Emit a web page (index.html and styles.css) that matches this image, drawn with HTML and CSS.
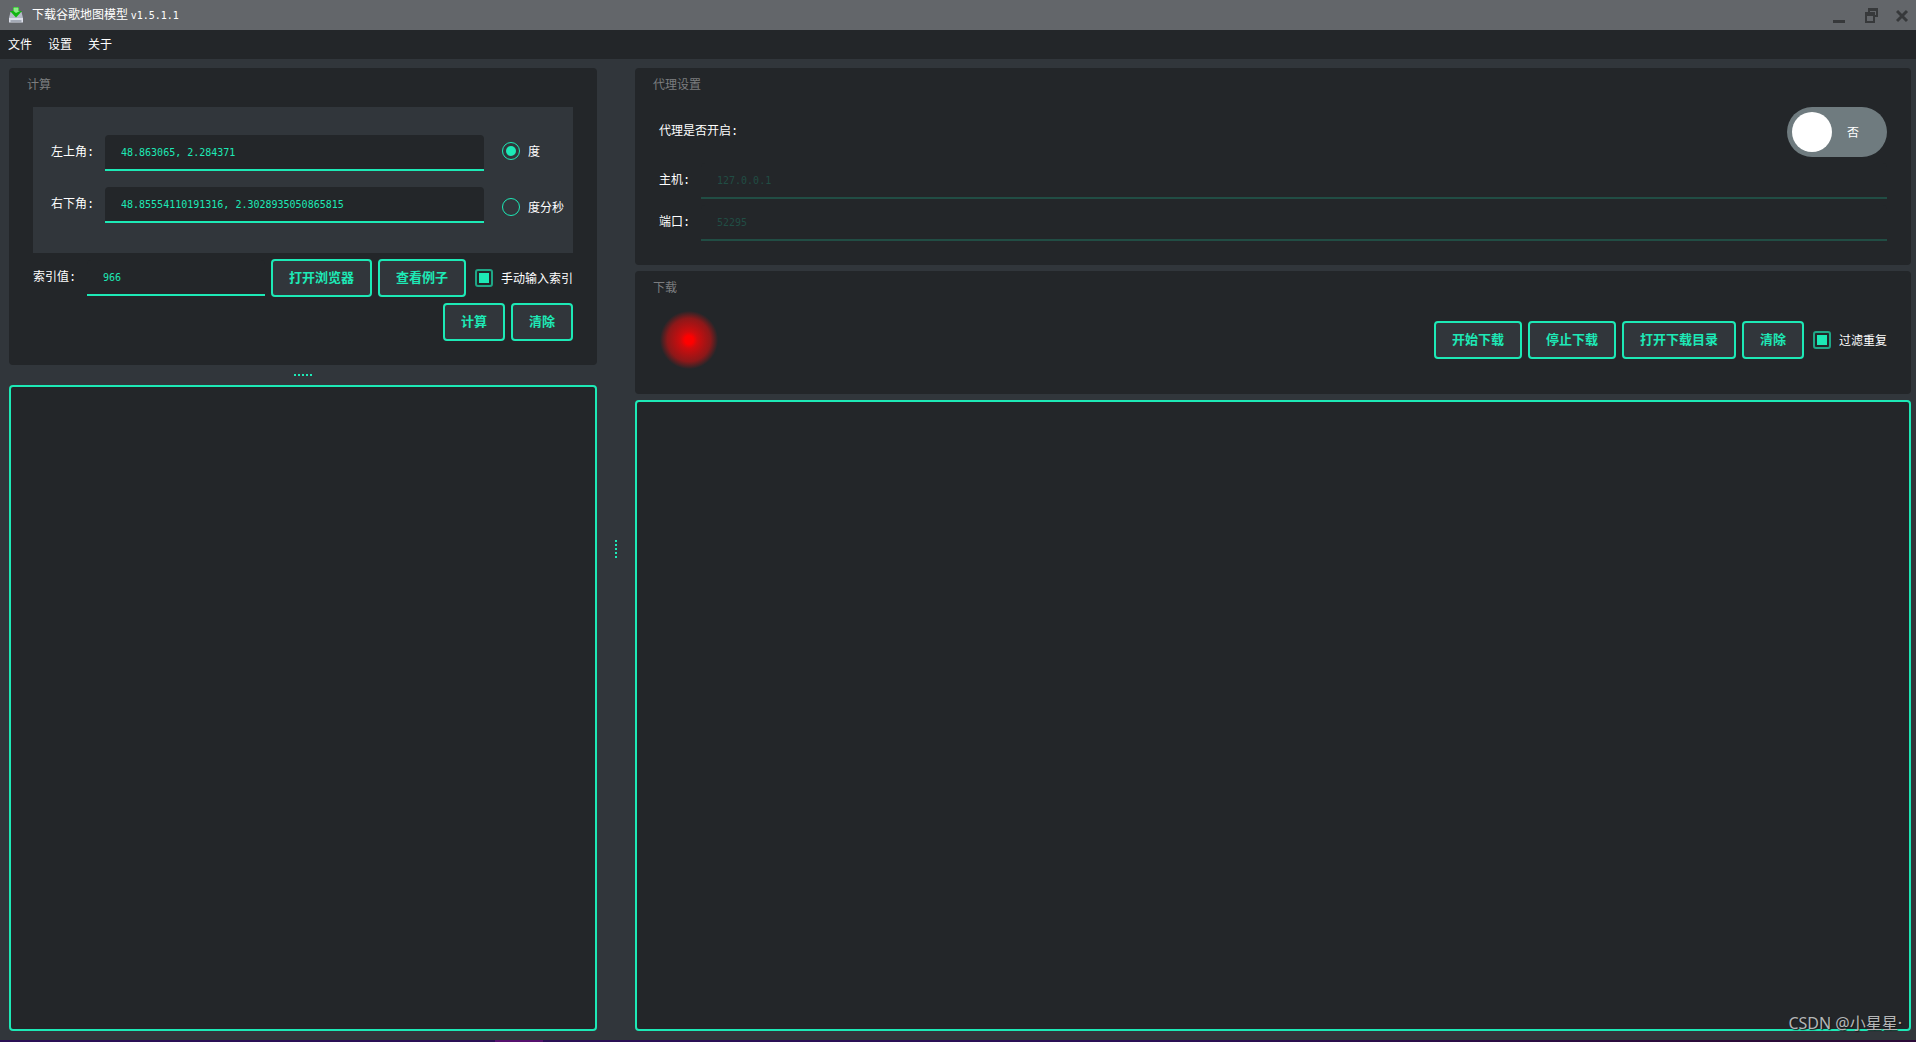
FILE: index.html
```html
<!DOCTYPE html>
<html lang="zh-CN">
<head>
<meta charset="utf-8">
<title>下载谷歌地图模型 v1.5.1.1</title>
<link rel="stylesheet" href="styles.css">
</head>
<body>
<header class="titlebar">
  <svg class="app-icon" viewBox="0 0 14 16" aria-hidden="true">
    <path d="M1.500 5h11l1.500 6H0z" fill="#b4bac6"/>
    <path d="M0 11h14v4.500H0z" fill="#dcdfea"/>
    <path d="M1.500 13.500h11v1h-11z" fill="#6d7482"/>
    <path d="M4 0h6v4h3L7 10.500 1 4h3z" fill="#12b512"/>
    <path d="M4.500 .5h5V4H11L7 6 4.500 4z" fill="#8fe98a"/>
  </svg>
  <h1 class="app-title">下载谷歌地图模型 <span class="latin">v1.5.1.1</span></h1>
  <div class="window-controls">
    <button class="win-btn" type="button" aria-label="最小化">
      <svg viewBox="0 0 14 16"><path d="M1 13h12v3H1z" fill="#37393b"/></svg>
    </button>
    <button class="win-btn" type="button" aria-label="还原">
      <svg viewBox="0 0 14 16"><path d="M4 1h10v9h-3V8h1V4H6v1H4zM1 5h10v11H1zM3 9v5h6V9z" fill="#37393b" fill-rule="evenodd"/></svg>
    </button>
    <button class="win-btn" type="button" aria-label="关闭">
      <svg viewBox="0 0 14 16"><path d="M1 4l10 10M11 4L1 14" stroke="#37393b" stroke-width="3"/></svg>
    </button>
  </div>
</header>
<nav class="menubar">
  <button class="menu-item" type="button">文件</button>
  <button class="menu-item" type="button">设置</button>
  <button class="menu-item" type="button">关于</button>
</nav>
<main class="workspace">
  <div class="column">
    <section class="panel">
      <h2 class="panel-title">计算</h2>
      <div class="panel-body">
        <div class="coords">
          <div class="coord-fields">
            <div class="field">
              <label class="field-label" for="top-left">左上角:</label>
              <input class="text-input" id="top-left" type="text" value="48.863065, 2.284371">
            </div>
            <div class="field">
              <label class="field-label" for="bottom-right">右下角:</label>
              <input class="text-input" id="bottom-right" type="text" value="48.85554110191316, 2.3028935050865815">
            </div>
          </div>
          <div class="units">
            <label class="choice"><input class="radio" type="radio" name="unit" checked>度</label>
            <label class="choice"><input class="radio" type="radio" name="unit">度分秒</label>
          </div>
        </div>
        <div class="row">
          <div class="field">
            <label class="field-label" for="index">索引值:</label>
            <input class="text-input" id="index" type="text" value="966">
          </div>
          <button class="btn" type="button">打开浏览器</button>
          <button class="btn" type="button">查看例子</button>
          <label class="choice in-row"><input class="check" type="checkbox" checked>手动输入索引</label>
        </div>
        <div class="row end">
          <button class="btn" type="button">计算</button>
          <button class="btn" type="button">清除</button>
        </div>
      </div>
    </section>
    <div class="splitter horizontal"><i></i><i></i><i></i><i></i><i></i></div>
    <textarea class="output" aria-label="计算结果"></textarea>
  </div>
  <div class="splitter vertical"><i></i><i></i><i></i><i></i><i></i></div>
  <div class="column spaced">
    <section class="panel">
      <h2 class="panel-title">代理设置</h2>
      <div class="panel-body">
        <div class="row between">
          <label class="field-label wide" for="proxy">代理是否开启:</label>
          <label class="switch"><input class="switch-input" id="proxy" type="checkbox"><span class="switch-text">否</span></label>
        </div>
        <div class="field">
          <label class="field-label short" for="host">主机:</label>
          <input class="text-input" id="host" type="text" value="127.0.0.1" disabled>
        </div>
        <div class="field">
          <label class="field-label short" for="port">端口:</label>
          <input class="text-input" id="port" type="text" value="52295" disabled>
        </div>
      </div>
    </section>
    <section class="panel">
      <h2 class="panel-title">下载</h2>
      <div class="panel-body">
        <div class="row">
          <div class="led"></div>
          <button class="btn" type="button">开始下载</button>
          <button class="btn" type="button">停止下载</button>
          <button class="btn" type="button">打开下载目录</button>
          <button class="btn" type="button">清除</button>
          <label class="choice in-row"><input class="check" type="checkbox" checked>过滤重复</label>
        </div>
      </div>
    </section>
    <textarea class="output" aria-label="下载日志"></textarea>
  </div>
</main>
<div class="desktop-edge"></div>
<div class="watermark">CSDN @小星星·</div>
</body>
</html>
```
FILE: styles.css
```css
:root {
  --accent: #1de9b6;
  --dark: #232629;
  --surface: #31363b;
}

* {
  box-sizing: border-box;
}

body {
  margin: 0;
  min-height: 100vh;
  display: flex;
  flex-direction: column;
  position: relative;
  background: var(--surface);
  color: #fff;
  font: 12px/18px "Noto Sans CJK SC", sans-serif;
}

button,
input,
textarea {
  font: inherit;
  margin: 0;
}

.titlebar {
  display: flex;
  align-items: center;
  height: 30px;
  padding: 0 6px 0 9px;
  background: #63666a;
}

.app-icon {
  width: 14px;
  height: 16px;
}

.app-title {
  flex: 1;
  margin: 0 0 0 9px;
  font-size: 12px;
  font-weight: 400;
}

.latin {
  font-family: "DejaVu Sans Mono", monospace;
  font-size: 10px;
}

.window-controls {
  display: flex;
  gap: 18px;
}

.win-btn {
  width: 14px;
  height: 16px;
  padding: 0;
  border: 0;
  background: none;
}

.win-btn svg {
  display: block;
}

.menubar {
  display: flex;
  gap: 16px;
  height: 29px;
  padding: 0 8px 2px;
  background: var(--dark);
}

.menu-item {
  padding: 0;
  border: 0;
  background: none;
  color: #fff;
}

.workspace {
  flex: 1;
  display: grid;
  grid-template-columns: 588fr 38px 1276fr;
  padding: 9px 5px 9px 9px;
}

.column {
  display: flex;
  flex-direction: column;
  min-width: 0;
}

.spaced {
  gap: 6px;
}

.panel {
  border-radius: 4px;
  background: var(--dark);
}

.panel-title {
  height: 39px;
  margin: 0;
  padding: 7px 18px;
  color: #7b7d7f;
  font-size: 12px;
  font-weight: 400;
}

.panel-body {
  display: flex;
  flex-direction: column;
  gap: 6px;
  padding: 0 24px 24px;
}

.coords {
  display: flex;
  align-items: center;
  gap: 18px;
  padding: 28px 9px 30px 18px;
  background: var(--surface);
}

.coord-fields {
  flex: 1;
  display: flex;
  flex-direction: column;
  gap: 16px;
}

.units {
  display: flex;
  flex-direction: column;
  gap: 38px;
}

.field {
  flex: 1;
  display: flex;
  align-items: center;
  gap: 12px;
  min-width: 0;
}

.field-label {
  flex: none;
  width: 42px;
  font-family: "Liberation Mono", "Noto Sans CJK SC", monospace;
  white-space: nowrap;
}

.short {
  width: 30px;
}

.wide {
  width: auto;
}

.text-input {
  flex: 1;
  min-width: 0;
  height: 36px;
  padding: 0 16px;
  border: 0;
  border-bottom: 2px solid var(--accent);
  border-radius: 4px 4px 0 0;
  outline: 0;
  background: var(--dark);
  color: var(--accent);
  font-family: "DejaVu Sans Mono", monospace;
  font-size: 10px;
}

.text-input:disabled {
  border-color: #214d44;
  color: #214d44;
}

.row {
  display: flex;
  align-items: center;
  gap: 6px;
}

.end {
  justify-content: flex-end;
}

.between {
  justify-content: space-between;
}

.btn {
  height: 38px;
  padding: 0 16px 2px;
  border: 2px solid var(--accent);
  border-radius: 4px;
  background: var(--surface);
  color: var(--accent);
  font-size: 13px;
  font-weight: 700;
  line-height: 18px;
  white-space: nowrap;
}

.choice {
  display: flex;
  align-items: center;
  gap: 8px;
  white-space: nowrap;
}

.in-row {
  padding-left: 3px;
}

.radio,
.check {
  appearance: none;
  display: grid;
  place-content: center;
  width: 18px;
  height: 18px;
}

.radio {
  border: 1px solid var(--accent);
  border-radius: 50%;
}

.check {
  border: 2px solid #1fa686;
  border-radius: 3px;
}

.radio:checked::before,
.check:checked::before {
  content: "";
  width: 10px;
  height: 10px;
  background: var(--accent);
}

.radio:checked::before {
  border-radius: 50%;
}

.switch {
  display: grid;
  align-items: center;
  width: 100px;
  height: 50px;
}

.switch-input,
.switch-text {
  grid-area: 1 / 1;
}

.switch-input {
  appearance: none;
  width: 100%;
  height: 100%;
  padding: 5px;
  border-radius: 25px;
  background: #6f7b7f;
}

.switch-input::before {
  content: "";
  display: block;
  width: 40px;
  height: 40px;
  border-radius: 50%;
  background: #fff;
}

.switch-text {
  justify-self: end;
  padding-right: 28px;
}

.led {
  width: 60px;
  height: 60px;
  margin-right: auto;
  background: radial-gradient(circle closest-side, #f00 0, #f00 14%, #d00c0d 28%, #8c1819 72%, #232629 97%);
}

.splitter {
  display: flex;
  align-items: center;
  justify-content: center;
  gap: 2px;
}

.splitter i {
  width: 2px;
  height: 2px;
  background: var(--accent);
}

.horizontal {
  height: 20px;
  cursor: row-resize;
}

.vertical {
  flex-direction: column;
  padding-bottom: 2px;
  cursor: col-resize;
}

.output {
  flex: 1;
  display: block;
  width: 100%;
  min-height: 120px;
  padding: 8px;
  border: 2px solid var(--accent);
  border-radius: 4px;
  outline: 0;
  resize: none;
  background: var(--dark);
  color: var(--accent);
}

.desktop-edge {
  height: 2px;
  background: linear-gradient(90deg, #2a0f55 0 495px, #56106e 495px 543px, #2a0f55 543px 60%, #2b0a38 90%);
}

.watermark {
  position: absolute;
  right: 14px;
  bottom: 7px;
  color: #b4b6b7;
  font-family: "Noto Sans", "Noto Sans CJK SC", sans-serif;
  font-size: 16px;
  line-height: 24px;
  text-shadow: 1px 1px 1px #17191b;
}
```
